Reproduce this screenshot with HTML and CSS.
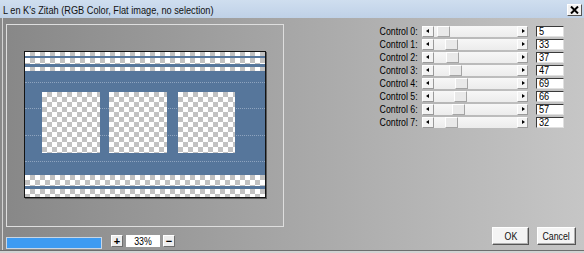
FILE: index.html
```html
<!DOCTYPE html>
<html lang="en">
<head>
    <meta charset="UTF-8">
    <title>L en K's Zitah</title>
    <link rel="stylesheet" href="styles.css">
</head>
<body>
    <div class="window">
        <div class="titlebar">
            <span class="title sq">L en K's Zitah (RGB Color, Flat image, no selection)</span>
            <button class="close" type="button">
                <svg width="9" height="8" viewBox="0 0 9 8"><path d="M1 0.5 L8 7.5 M8 0.5 L1 7.5" stroke="#000" stroke-width="2"/></svg>
            </button>
        </div>

        <div class="client">
            <div class="left">
                <!-- vista previa -->
                <div class="preview">
                    <div class="film">
                        <div class="strip">
                            <div class="checker h4"></div>
                            <div class="band h2"></div>
                            <div class="checker h6"></div>
                            <div class="band h3"></div>
                            <div class="checker h4"></div>
                        </div>
                        <div class="frames">
                            <div class="guides"><i></i><i></i><i></i><i></i></div>
                            <div class="cell checker"></div>
                            <div class="cell checker"></div>
                            <div class="cell checker narrow"></div>
                        </div>
                        <div class="strip">
                            <div class="checker h11"></div>
                            <div class="band h3"></div>
                            <div class="checker h8"></div>
                        </div>
                    </div>
                </div>

                <div class="statusbar">
                    <div class="progress"></div>
                    <div class="zoom">
                        <button class="zoom-btn" type="button">+</button>
                        <span class="zoom-value"><span class="sq">33%</span></span>
                        <button class="zoom-btn" type="button">&minus;</button>
                    </div>
                </div>
            </div>

            <div class="right">
                <div class="controls">
                    <label class="ctl-label"><span class="sq">Control 0:</span></label>
                    <div class="scroll"><span class="arrow arrow-left"></span><span class="track"><span class="thumb" style="left: 1px"></span></span><span class="arrow arrow-right"></span></div>
                    <div class="ctl-value"><span class="sq">5</span></div>

                    <label class="ctl-label"><span class="sq">Control 1:</span></label>
                    <div class="scroll"><span class="arrow arrow-left"></span><span class="track"><span class="thumb" style="left: 9px"></span></span><span class="arrow arrow-right"></span></div>
                    <div class="ctl-value"><span class="sq">33</span></div>

                    <label class="ctl-label"><span class="sq">Control 2:</span></label>
                    <div class="scroll"><span class="arrow arrow-left"></span><span class="track"><span class="thumb" style="left: 10px"></span></span><span class="arrow arrow-right"></span></div>
                    <div class="ctl-value"><span class="sq">37</span></div>

                    <label class="ctl-label"><span class="sq">Control 3:</span></label>
                    <div class="scroll"><span class="arrow arrow-left"></span><span class="track"><span class="thumb" style="left: 13px"></span></span><span class="arrow arrow-right"></span></div>
                    <div class="ctl-value"><span class="sq">47</span></div>

                    <label class="ctl-label"><span class="sq">Control 4:</span></label>
                    <div class="scroll"><span class="arrow arrow-left"></span><span class="track"><span class="thumb" style="left: 19px"></span></span><span class="arrow arrow-right"></span></div>
                    <div class="ctl-value"><span class="sq">69</span></div>

                    <label class="ctl-label"><span class="sq">Control 5:</span></label>
                    <div class="scroll"><span class="arrow arrow-left"></span><span class="track"><span class="thumb" style="left: 18px"></span></span><span class="arrow arrow-right"></span></div>
                    <div class="ctl-value"><span class="sq">66</span></div>

                    <label class="ctl-label"><span class="sq">Control 6:</span></label>
                    <div class="scroll"><span class="arrow arrow-left"></span><span class="track"><span class="thumb" style="left: 16px"></span></span><span class="arrow arrow-right"></span></div>
                    <div class="ctl-value"><span class="sq">57</span></div>

                    <label class="ctl-label"><span class="sq">Control 7:</span></label>
                    <div class="scroll"><span class="arrow arrow-left"></span><span class="track"><span class="thumb" style="left: 9px"></span></span><span class="arrow arrow-right"></span></div>
                    <div class="ctl-value"><span class="sq">32</span></div>
                </div>

                <div class="actions">
                    <button class="btn btn-ok" type="button"><span class="sq">OK</span></button>
                    <button class="btn btn-cancel" type="button"><span class="sq">Cancel</span></button>
                </div>
            </div>
        </div>
    </div>
</body>
</html>
```

FILE: styles.css
```css
body {
    margin: 0;
    padding: 0;
    font-family: "Liberation Sans", Arial, sans-serif;
    font-size: 11px;
    color: #000;
    background-color: #d4d4d4;
}
/* texto estrecho, como en la captura */
.sq {
    display: inline-block;
    transform: scaleX(0.8);
    transform-origin: left center;
    white-space: nowrap;
}
.window {
    width: 584px;
    height: 253px;
    overflow: hidden;
    display: flex;
    flex-direction: column;
}
/* Barra de titulo */
.titlebar {
    height: 18px;
    flex: none;
    display: flex;
    align-items: center;
    justify-content: space-between;
    padding: 0 2px 0 3px;
    background: linear-gradient(#cfdeef, #bfd1e7);
}
.title {
    font-size: 11.5px;
    color: #111;
    padding-top: 1px;
}
.close {
    width: 15px;
    height: 12px;
    padding: 0;
    margin-top: 2px;
    display: flex;
    align-items: center;
    justify-content: center;
    background: #f2f2f2;
    border: 1px solid;
    border-color: #fff #555 #555 #fff;
}
.client {
    flex: 1;
    display: flex;
    background: linear-gradient(to right, #878787, #a7a7a7 50%, #c6c6c6);
    box-shadow: inset 2px 0 #8a8a8a, inset 3px 0 #d2d2d2;
    border-bottom: 1px solid #6e6e6e;
    margin-bottom: 2px;
}
/* Columna izquierda */
.left {
    width: 284px;
    padding: 6px 0 0 6px;
    display: flex;
    flex-direction: column;
}
.preview {
    width: 276px;
    height: 201px;
    border: 1px solid #dedede;
    display: flex;
    align-items: center;
    justify-content: center;
}
.film {
    width: 240px;
    height: 145px;
    margin-top: -2px;
    border: 1px solid #141414;
    box-shadow: 1px 1px 0 #5a5a5a;
    background-color: #56769b;
    display: flex;
    flex-direction: column;
}
.checker {
    background: repeating-conic-gradient(#c2c2c2 0 25%, #fff 0 50%) 0 0 / 10px 10px;
}
.band {
    background-color: #56769b;
}
.h2 { height: 2px; }
.h3 { height: 3px; }
.h4 { height: 4px; }
.h6 { height: 6px; }
.h8 { height: 8px; }
.h11 { height: 11px; }
.frames {
    position: relative;
    height: 61px;
    padding: 21px 0 22px 17px;
    display: flex;
    gap: 9px;
}
.guides {
    position: absolute;
    left: 0;
    right: 0;
    top: 11px;
    display: flex;
    flex-direction: column;
    gap: 25.3px;
}
.guides i {
    display: block;
    height: 0;
    border-top: 1px dotted rgba(210, 222, 236, 0.45);
}
.cell {
    position: relative;
    width: 58px;
    height: 61px;
}
.cell.narrow {
    width: 57px;
    margin-left: 2px;
}
/* Barra inferior */
.statusbar {
    display: flex;
    align-items: center;
    gap: 9px;
    margin-top: 6px;
}
.progress {
    width: 94px;
    height: 10px;
    margin-top: 4px;
    background-color: #3d9bf2;
    border: 1px solid #c9d6e4;
}
.zoom {
    display: flex;
    align-items: center;
    gap: 3px;
}
.zoom-btn {
    width: 12px;
    height: 12px;
    padding: 0;
    font-family: "Liberation Sans", Arial, sans-serif;
    font-size: 11px;
    font-weight: bold;
    line-height: 9px;
    background: #ededed;
    border: 1px solid;
    border-color: #fff #6e6e6e #6e6e6e #fff;
}
.zoom-value {
    width: 34px;
    height: 12px;
    line-height: 12px;
    text-align: center;
    background: #fff;
}
.zoom-value .sq {
    transform-origin: center;
}
/* Columna derecha */
.right {
    flex: 1;
    display: flex;
    flex-direction: column;
    justify-content: space-between;
    padding: 8px 8px 5px 0;
}
.controls {
    display: grid;
    grid-template-columns: 128px 106px 28px;
    column-gap: 4px;
    row-gap: 2px;
    align-items: center;
}
.ctl-label {
    text-align: right;
    line-height: 11px;
}
.ctl-label .sq {
    transform-origin: right center;
}
.scroll {
    display: flex;
    height: 11px;
}
.arrow {
    position: relative;
    width: 10px;
    height: 9px;
    background: #f3f3f3;
    border: 1px solid;
    border-color: #fff #9a9a9a #9a9a9a #fff;
}
.arrow::after {
    content: "";
    position: absolute;
    top: 2px;
    border-top: 2.5px solid transparent;
    border-bottom: 2.5px solid transparent;
}
.arrow-left::after {
    left: 3px;
    border-right: 3px solid #000;
}
.arrow-right::after {
    left: 4px;
    border-left: 3px solid #000;
}
.arrow-right {
    width: 9px;
}
.track {
    position: relative;
    flex: 1;
    background: linear-gradient(#f7f7f7, #ececec);
}
.thumb {
    position: absolute;
    top: 0;
    width: 11px;
    height: 9px;
    margin-left: 2px;
    background: #e9e9e9;
    border: 1px solid;
    border-color: #fff #a5a5a5 #a5a5a5 #fff;
}
.ctl-value {
    width: 28px;
    height: 11px;
    padding-left: 2px;
    margin-left: 4px;
    line-height: 11px;
    background: #fff;
    border: 1px solid;
    border-color: #3a3a3a #e0e0e0 #e0e0e0 #3a3a3a;
    box-sizing: border-box;
    overflow: hidden;
}
.ctl-value .sq {
    margin-top: -1px;
    vertical-align: top;
    font-size: 11.5px;
}
.actions {
    display: flex;
    justify-content: flex-end;
    gap: 8px;
}
.btn {
    height: 18px;
    padding: 0;
    font-family: inherit;
    font-size: 11px;
    color: #111;
    background: #f4f4f4;
    border: 1px solid;
    border-color: #fff #555 #555 #fff;
    box-shadow: inset -1px -1px #b0b0b0;
}
.btn .sq {
    transform-origin: center;
}
.btn-ok {
    width: 37px;
}
.btn-cancel {
    width: 39px;
}
```
